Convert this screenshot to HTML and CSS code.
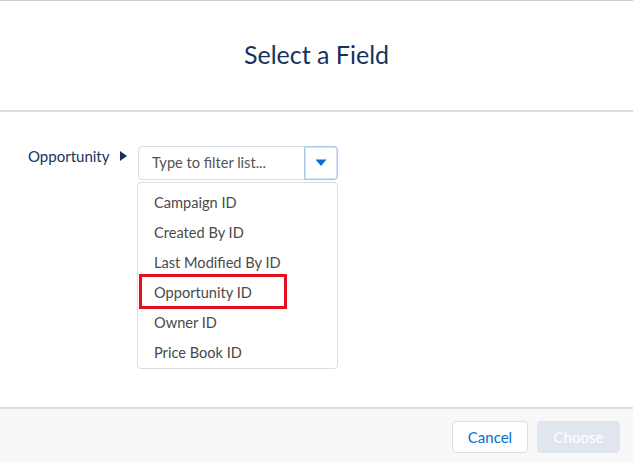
FILE: index.html
```html
<!DOCTYPE html>
<html>
<head>
<meta charset="utf-8">
<link rel="stylesheet" href="styles.css">
</head>
<body>
<div class="modal">
  <header class="head"><h1 class="title">Select a Field</h1></header>
  <main class="content">
    <div class="row">
      <span class="label">Opportunity</span>
      <svg class="caret" width="8" height="10" viewBox="0 0 8 10"><path d="M1 0 L8 5 L1 10 Z" fill="#16325c"/></svg>
      <div class="combo">
        <div class="field">
          <span class="placeholder">Type to filter list...</span>
          <span class="toggle"><svg width="12" height="8" viewBox="0 0 12 8"><path d="M0.5 0.5 H11.5 L6 7 Z" fill="#0070d2"/></svg></span>
        </div>
        <ul class="list">
          <li class="item">Campaign ID</li>
          <li class="item">Created By ID</li>
          <li class="item">Last Modified By ID</li>
          <li class="item marked">Opportunity ID</li>
          <li class="item">Owner ID</li>
          <li class="item">Price Book ID</li>
        </ul>
      </div>
    </div>
  </main>
  <footer class="foot">
    <button class="btn cancel">Cancel</button>
    <button class="btn choose">Choose</button>
  </footer>
</div>
</body>
</html>
```
FILE: styles.css
```css
html, body { margin: 0; padding: 0; }
body { font-family: Lato, "Open Sans", sans-serif; background: #fff; }
.modal { width: 633px; height: 462px; display: flex; flex-direction: column; }
.head {
  height: 109px;
  border-top: 1px solid #cfcfcf;
  border-bottom: 2px solid #dcdcdc;
  display: flex; align-items: center; justify-content: center;
}
.title { margin: 0; font-weight: 400; font-size: 25px; color: #16325c; padding-bottom: 4px; }
.content { flex: 1; padding: 34px 0 0 28px; }
.row { display: flex; align-items: flex-start; }
.label { font-size: 15px; color: #16325c; line-height: 20px; width: 91px; }
.caret { margin-top: 5px; width: 8px; height: 10px; margin-right: 11px; }
.combo { width: 200px; display: flex; flex-direction: column; gap: 2px; }
.field {
  height: 34px; box-sizing: border-box;
  border: 1px solid #d8dde6; border-radius: 4px;
  display: flex; align-items: stretch;
}
.placeholder { flex: 1; font-size: 14.6px; color: #545454; padding-left: 13px; line-height: 32px; }
.toggle {
  width: 34px; box-sizing: border-box;
  margin: -1px -1px -1px 0;
  border: 1px solid #a9c7ec; border-radius: 0 4px 4px 0;
  box-shadow: inset 0 0 0 1px #d6e4f6;
  display: flex; align-items: center; justify-content: center;
}
.list {
  margin: 0 0 0 -1px; padding: 5px 0 0; list-style: none;
  border: 1px solid #d8dde6; border-radius: 4px; width: 201px; box-sizing: border-box;
}
.item { height: 30px; line-height: 30px; font-size: 14.6px; color: #4a4a4a; padding-left: 16px; position: relative; }
.marked::after {
  content: ""; position: absolute; left: 1px; top: -4px; width: 148px; height: 35px;
  box-sizing: border-box; border: 3px solid #e3101f;
}
.foot {
  height: 41px;
  border-top: 2px solid #dcdcdc;
  background: #f8f8f8;
  display: flex; justify-content: flex-end; align-items: flex-start;
  padding: 12px 13px 0 0;
  gap: 9px;
}
.btn {
  height: 32px; border-radius: 4px; font-family: Lato, "Open Sans", sans-serif; font-size: 15px;
  padding: 0; cursor: pointer;
}
.cancel { width: 76px; background: #fff; border: 1px solid #d8dde6; color: #0070d2; }
.choose { width: 83px; background: #e0e5ee; border: 1px solid #e0e5ee; color: #fff; }
```
